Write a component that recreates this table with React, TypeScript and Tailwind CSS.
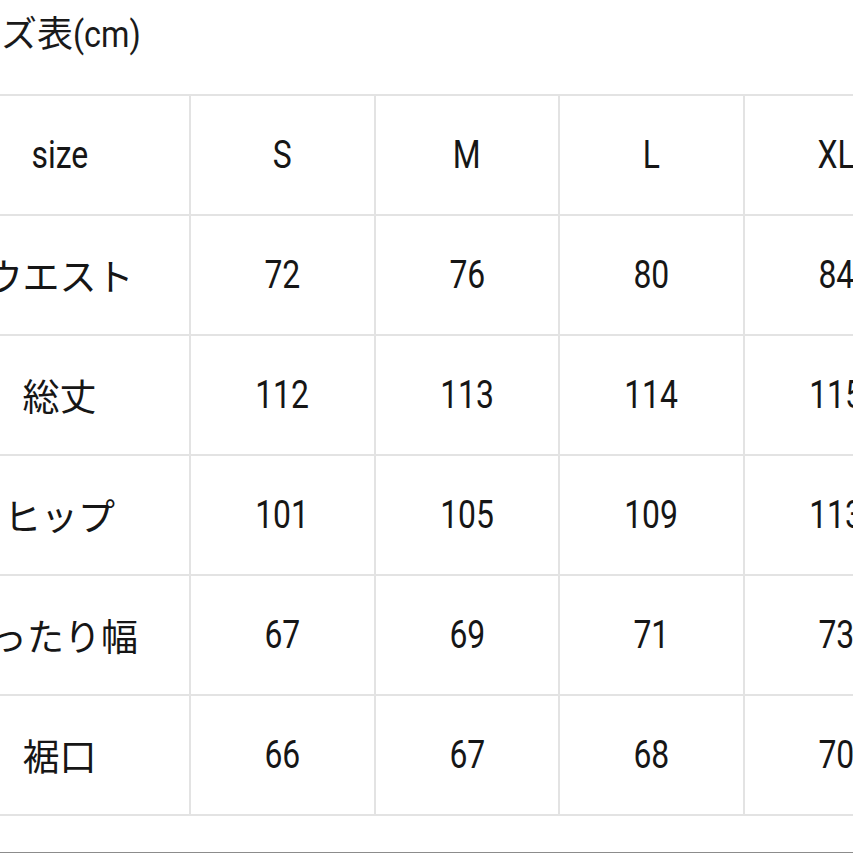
const cols = ["S", "M", "L", "XL"];

const rows: { label: string; values: string[]; shift?: string }[] = [
  { label: "ウエスト", values: ["72", "76", "80", "84"] },
  { label: "総丈", values: ["112", "113", "114", "115"] },
  { label: "ヒップ", values: ["101", "105", "109", "113"] },
  { label: "ゆったり幅", values: ["67", "69", "71", "73"], shift: "mr-[28px]" },
  { label: "裾口", values: ["66", "67", "68", "70"] },
];

const latin = "font-['Roboto','Liberation_Sans',sans-serif]";
const cjk = "font-['Noto_Sans_CJK_JP','Noto_Sans',sans-serif]";

const Num = ({ children }: { children: string }) => (
  <span className={`inline-block scale-x-[0.84] ${latin} text-[38px] leading-none text-[#161616]`}>
    {children}
  </span>
);

const Cell = ({ children }: { children: React.ReactNode }) => (
  <div className="flex h-[118px] items-center justify-center bg-white whitespace-nowrap">
    {children}
  </div>
);

export default function App() {
  return (
    <div className="h-[853px] w-[853px] overflow-hidden bg-white">
      {/* title */}
      <div className="h-[94px] pt-[13px]">
        <div className={`-ml-[70px] whitespace-nowrap text-[36px] leading-none text-[#1a1a1a] ${cjk}`}>
          サイズ表
          <span className={`inline-block origin-left scale-x-[0.9] ${latin}`}>(cm)</span>
        </div>
      </div>

      {/* table */}
      <div className="grid w-max -ml-[72px] grid-cols-[259px_183px_182px_183px_183px] gap-[2px] bg-[#e3e3e3] p-[2px]">
        <Cell>
          <Num>size</Num>
        </Cell>
        {cols.map((c) => (
          <Cell key={c}>
            <Num>{c}</Num>
          </Cell>
        ))}
        {rows.map((r) => (
          <div key={r.label} className="contents">
            <Cell>
              <span className={`text-[37px] leading-none text-[#161616] ${cjk} ${r.shift ?? ""}`}>
                {r.label}
              </span>
            </Cell>
            {r.values.map((v, i) => (
              <Cell key={i}>
                <Num>{v}</Num>
              </Cell>
            ))}
          </div>
        ))}
      </div>

      {/* bottom rule */}
      <div className="mt-[36px] h-[2px] bg-[#8c8c8c]" />
    </div>
  );
}
